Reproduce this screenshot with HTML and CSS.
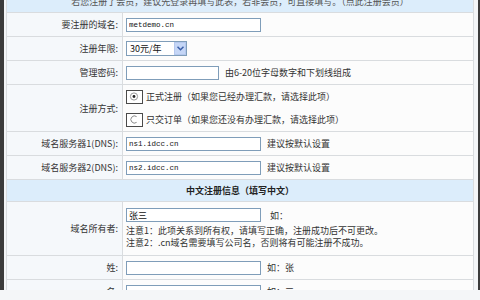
FILE: index.html
```html
<!DOCTYPE html>
<html lang="zh-CN">
<head>
<meta charset="utf-8">
<title>域名注册</title>
<link rel="stylesheet" href="styles.css">
</head>
<body>
<div class="frame">
  <table class="form">
    <colgroup><col class="c1"><col class="c2"></colgroup>
    <tr>
      <td colspan="2" class="strip h-top">若您注册了会员，建议先登录再填写此表，若非会员，可直接填写。（点此注册会员）</td>
    </tr>
    <tr>
      <td class="lbl h-row">要注册的域名:</td>
      <td class="val"><div class="line"><input class="ipt mono w-long" type="text" value="metdemo.cn"></div></td>
    </tr>
    <tr>
      <td class="lbl h-row">注册年限:</td>
      <td class="val">
        <div class="line">
          <span class="sel-wrap">
            <select class="sel"><option>30元/年</option></select>
            <span class="sel-btn"><svg width="7" height="5" viewBox="0 0 7 5"><path d="M0.5 0.8 L3.5 3.8 L6.5 0.8" fill="none" stroke="#3a5ea8" stroke-width="1.5"/></svg></span>
          </span>
        </div>
      </td>
    </tr>
    <tr>
      <td class="lbl h-row">管理密码:</td>
      <td class="val"><div class="line"><input class="ipt w-pw" type="password"><span class="hint">由6-20位字母数字和下划线组成</span></div></td>
    </tr>
    <tr>
      <td class="lbl h-radio">注册方式:</td>
      <td class="val">
        <div class="opts">
          <label class="opt"><span class="rbox"><svg width="14" height="11" viewBox="0 0 14 11"><circle cx="6" cy="5.5" r="3.6" fill="none" stroke="#9a9a9a" stroke-width="1"/><circle cx="6" cy="5.5" r="1.4" fill="#222"/></svg></span>正式注册（如果您已经办理汇款，请选择此项）</label>
          <label class="opt"><span class="rbox"><svg width="14" height="11" viewBox="0 0 14 11"><path d="M8.6 2.6 A3.6 3.6 0 1 0 8.6 8.4" fill="none" stroke="#8a8a8a" stroke-width="1"/></svg></span>只交订单（如果您还没有办理汇款，请选择此项）</label>
        </div>
      </td>
    </tr>
    <tr>
      <td class="lbl h-row">域名服务器1(DNS):</td>
      <td class="val"><div class="line"><input class="ipt mono w-long" type="text" value="ns1.idcc.cn"><span class="hint">建议按默认设置</span></div></td>
    </tr>
    <tr>
      <td class="lbl h-row">域名服务器2(DNS):</td>
      <td class="val"><div class="line"><input class="ipt mono w-long" type="text" value="ns2.idcc.cn"><span class="hint">建议按默认设置</span></div></td>
    </tr>
    <tr>
      <td colspan="2" class="section h-sec">中文注册信息（填写中文）</td>
    </tr>
    <tr>
      <td class="lbl h-owner">域名所有者:</td>
      <td class="val">
        <div class="line"><input class="ipt w-long" type="text" value="张三"><span class="hint wide">如：</span></div>
        <div class="notes">
          <div class="note">注意1：此项关系到所有权，请填写正确，注册成功后不可更改。</div>
          <div class="note">注意2：.cn域名需要填写公司名，否则将有可能注册不成功。</div>
        </div>
      </td>
    </tr>
    <tr>
      <td class="lbl h-row">姓:</td>
      <td class="val"><div class="line"><input class="ipt w-long" type="text"><span class="hint">如：张</span></div></td>
    </tr>
    <tr>
      <td class="lbl h-row">名:</td>
      <td class="val"><div class="line"><input class="ipt w-long" type="text"><span class="hint">如：三</span></div></td>
    </tr>
  </table>
</div>
</body>
</html>
```

FILE: styles.css
```css
html, body {
  margin: 0;
  padding: 0;
  background: #f4f6f8;
  overflow: hidden;
}
body {
  font-family: "Noto Sans CJK SC", "Liberation Sans", sans-serif;
  font-size: 9px;
  line-height: 11px;
  color: #333;
}
.frame {
  border-left: 4px solid #3b3b3b;
  border-right: 2px solid #3b3b3b;
  padding: 0 4px 0 2px;
  height: 300px;
  background: #f3f5f7;
}
.form {
  width: 468px;
  margin-top: -10px;
  border-collapse: separate;
  border-spacing: 1px;
  background: #d9dcdf;
  table-layout: fixed;
}
.c1 { width: 115px; }
.c2 { width: 350px; }
.form td {
  padding: 0;
  vertical-align: middle;
}
.h-top { height: 21px; }
.h-row { height: 23px; }
.h-radio { height: 46px; }
.h-sec { height: 21px; }
.h-owner { height: 53px; }

.strip {
  background: #dcedfb;
  color: #555;
  text-align: center;
  white-space: nowrap;
}
.section {
  background: #dcedfb;
  color: #222;
  font-weight: bold;
  text-align: center;
}
.form td.lbl {
  padding-right: 4px;
  text-align: right;
  background: #f5f8fb;
  color: #333;
  white-space: nowrap;
}
.form td.val {
  padding-left: 3px;
  background: #fcfcfc;
  white-space: nowrap;
}
.line {
  display: flex;
  align-items: center;
}
.ipt {
  box-sizing: border-box;
  height: 14px;
  margin: 0;
  padding: 0 2px;
  border: 1px solid #7f9db9;
  background: #fff;
  font-family: "Noto Sans CJK SC", sans-serif;
  font-size: 9px;
  color: #111;
  outline: none;
}
.mono {
  font-family: "Liberation Mono", "DejaVu Sans Mono", monospace;
  font-size: 7.5px;
}
.w-long { width: 135px; }
.w-pw { width: 93px; }
.hint {
  margin-left: 6px;
  color: #333;
}
.hint.wide { margin-left: 9px; }

.sel-wrap {
  position: relative;
  display: inline-block;
  width: 61px;
  height: 15px;
}
.sel {
  appearance: none;
  -webkit-appearance: none;
  box-sizing: border-box;
  width: 61px;
  height: 15px;
  margin: 0;
  padding: 0 0 0 3px;
  border: 1px solid #7f9db9;
  background: #fff;
  font-family: "Noto Sans CJK SC", sans-serif;
  font-size: 9px;
  color: #111;
  outline: none;
}
.sel-btn {
  position: absolute;
  top: 1px;
  right: 1px;
  width: 12px;
  height: 13px;
  background: #c5d6f6;
  border: 1px solid #b5c8ee;
  box-sizing: border-box;
  display: flex;
  align-items: center;
  justify-content: center;
}

.opts {
  display: flex;
  flex-direction: column;
  gap: 9px;
}
.opt {
  display: flex;
  align-items: center;
  height: 14px;
}
.rbox {
  box-sizing: border-box;
  width: 17px;
  height: 14px;
  border: 1px solid #4a4a4a;
  background: #fff;
  display: flex;
  align-items: center;
  justify-content: center;
  margin-right: 3px;
}
.notes {
  display: flex;
  flex-direction: column;
  margin-top: 3px;
}
.note {
  height: 12px;
  line-height: 12px;
  color: #333;
}
```
